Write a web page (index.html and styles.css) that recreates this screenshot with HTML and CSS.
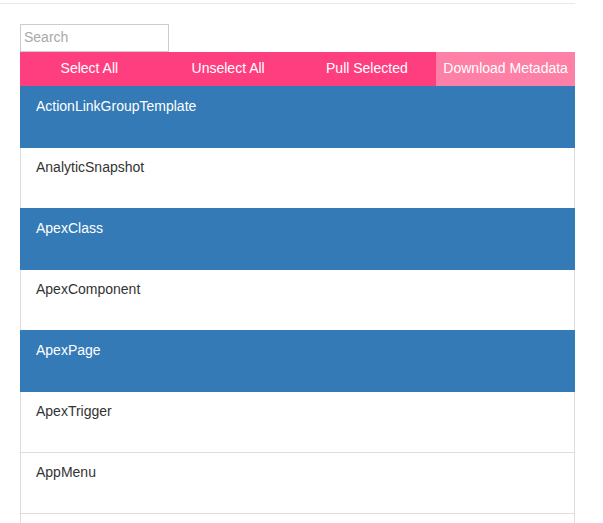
FILE: index.html
```html
<!DOCTYPE html>
<html>
<head>
<meta charset="utf-8">
<link rel="stylesheet" href="styles.css">
</head>
<body>
<div class="page">
  <div class="topline"></div>
  <div class="panel">
    <input class="search" type="text" placeholder="Search">
    <div class="toolbar">
      <button class="btn">Select All</button>
      <button class="btn">Unselect All</button>
      <button class="btn">Pull Selected</button>
      <button class="btn btn-light">Download Metadata</button>
    </div>
    <ul class="list">
      <li class="item active">ActionLinkGroupTemplate</li>
      <li class="item">AnalyticSnapshot</li>
      <li class="item active">ApexClass</li>
      <li class="item">ApexComponent</li>
      <li class="item active">ApexPage</li>
      <li class="item">ApexTrigger</li>
      <li class="item">AppMenu</li>
      <li class="item"></li>
    </ul>
  </div>
</div>
</body>
</html>
```
FILE: styles.css
```css
html, body {
  margin: 0;
  padding: 0;
  background: #fff;
  overflow: hidden;
}
body {
  font-family: "Liberation Sans", Arial, sans-serif;
  font-size: 14px;
  line-height: 20px;
  color: #333;
}
.page {
  width: 575px;
  height: 523px;
  overflow: hidden;
}
.topline {
  margin-top: 3px;
  height: 1px;
  background: #e8e8e8;
}
.panel {
  padding: 20px 0 0 20px;
}
.search {
  display: block;
  box-sizing: border-box;
  width: 149px;
  height: 28px;
  margin: 0;
  padding: 0 3px 2px;
  border: 1px solid #cccccc;
  font-family: "Liberation Sans", Arial, sans-serif;
  font-size: 14px;
  color: #333;
  outline: none;
}
.search::placeholder {
  color: #a9a9a9;
}
.toolbar {
  display: grid;
  grid-template-columns: repeat(4, 1fr);
  height: 34px;
  background: #ff3e7f;
}
.btn {
  border: 0;
  margin: 0;
  padding: 0 0 2px;
  background: #ff3e7f;
  color: #fff;
  font-family: "Liberation Sans", Arial, sans-serif;
  font-size: 14px;
  line-height: 20px;
}
.btn-light {
  background: #ff80a7;
}
.list {
  list-style: none;
  margin: 0;
  padding: 0;
}
.item {
  box-sizing: border-box;
  height: 62px;
  margin-bottom: -1px;
  padding: 9px 15px 11px;
  border: 1px solid #dddddd;
  background: #fff;
  color: #333;
}
.item.active {
  background: #337ab7;
  border-color: #337ab7;
  color: #fff;
  position: relative;
}
```
